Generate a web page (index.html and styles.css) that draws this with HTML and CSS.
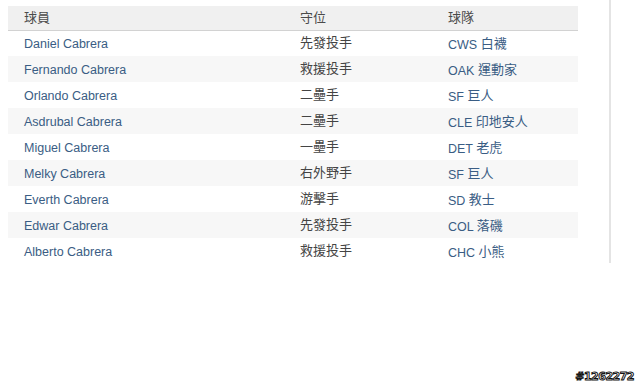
FILE: index.html
```html
<!DOCTYPE html>
<html lang="zh-Hant">
<head>
<meta charset="utf-8">
<link rel="stylesheet" href="styles.css">
</head>
<body>
<div class="frame">
  <table class="roster">
    <thead>
      <tr><th class="c-name">球員</th><th class="c-pos">守位</th><th class="c-team">球隊</th></tr>
    </thead>
    <tbody>
      <tr><td class="link">Daniel Cabrera</td><td class="zh">先發投手</td><td class="link team">CWS <span class="zh">白襪</span></td></tr>
      <tr><td class="link">Fernando Cabrera</td><td class="zh">救援投手</td><td class="link team">OAK <span class="zh">運動家</span></td></tr>
      <tr><td class="link">Orlando Cabrera</td><td class="zh">二壘手</td><td class="link team">SF <span class="zh">巨人</span></td></tr>
      <tr><td class="link">Asdrubal Cabrera</td><td class="zh">二壘手</td><td class="link team">CLE <span class="zh">印地安人</span></td></tr>
      <tr><td class="link">Miguel Cabrera</td><td class="zh">一壘手</td><td class="link team">DET <span class="zh">老虎</span></td></tr>
      <tr><td class="link">Melky Cabrera</td><td class="zh">右外野手</td><td class="link team">SF <span class="zh">巨人</span></td></tr>
      <tr><td class="link">Everth Cabrera</td><td class="zh">游擊手</td><td class="link team">SD <span class="zh">教士</span></td></tr>
      <tr><td class="link">Edwar Cabrera</td><td class="zh">先發投手</td><td class="link team">COL <span class="zh">落磯</span></td></tr>
      <tr><td class="link">Alberto Cabrera</td><td class="zh">救援投手</td><td class="link team">CHC <span class="zh">小熊</span></td></tr>
    </tbody>
  </table>
</div>
<div class="footer"><span class="mark">#1262272</span></div>
</body>
</html>
```
FILE: styles.css
```css
html, body {
  margin: 0;
  padding: 0;
  background: #ffffff;
}
body {
  font-family: "Liberation Sans", Arial, "Noto Sans CJK TC", sans-serif;
  font-size: 12.5px;
  color: #333333;
  width: 640px;
  height: 384px;
  overflow: hidden;
}
.frame {
  width: 611px;
  height: 263px;
  box-sizing: border-box;
  padding: 6px 0 0 8px;
  border-right: 2px solid #e4e4e4;
}
.roster {
  width: 570px;
  border-collapse: collapse;
  table-layout: fixed;
}
.roster th {
  height: 24px;
  background: #f0f0f0;
  border-bottom: 1px solid #d2d2d2;
  font-weight: normal;
  text-align: left;
  color: #4a4a4a;
  padding: 0 0 2px 16px;
  font-size: 13px;
  box-sizing: border-box;
}
.roster td {
  height: 26px;
  padding: 0 0 0 16px;
  color: #3a3a3a;
  white-space: nowrap;
  font-size: 12.5px;
  box-sizing: border-box;
}
.roster td.link {
  color: #3a5d84;
  padding-top: 1px;
}
.roster td.team {
  padding-top: 0;
  padding-bottom: 2px;
}
.roster td.zh {
  font-size: 13px;
  padding-bottom: 3px;
  color: #444444;
}
.roster span.zh {
  font-size: 13px;
  vertical-align: 1px;
}
.roster tbody tr:nth-child(even) td {
  background: #f7f7f7;
}
.c-name { width: 276px; }
.c-pos { width: 148px; }
.c-team { width: auto; }
.footer {
  display: flex;
  justify-content: flex-end;
  padding: 107px 6px 0 0;
}
.mark {
  font-family: "DejaVu Sans", sans-serif;
  font-weight: bold;
  font-size: 11px;
  color: #ffffff;
  -webkit-text-stroke: 1px #111111;
  letter-spacing: -0.5px;
}
```
